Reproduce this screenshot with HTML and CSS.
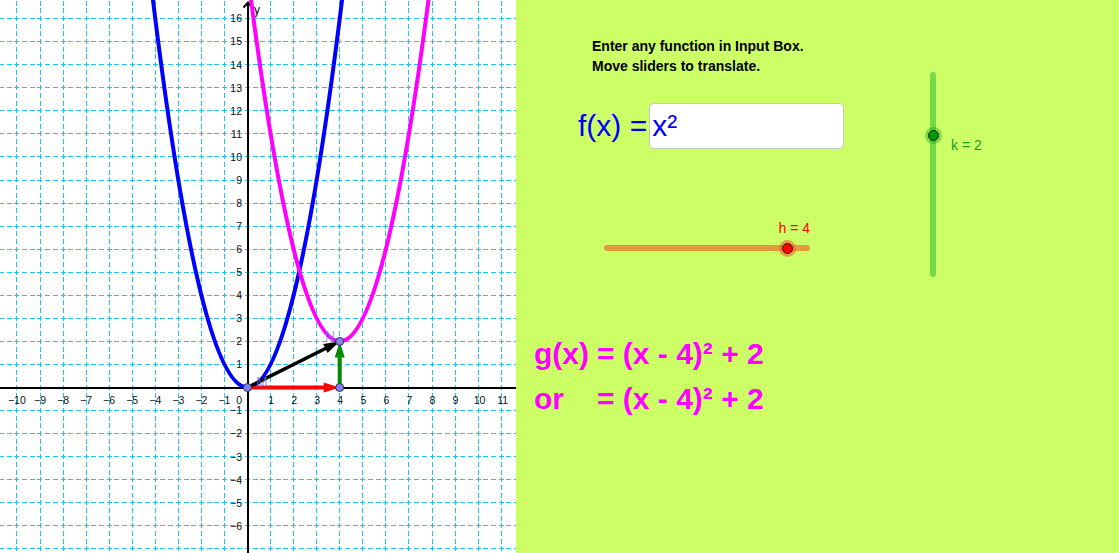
FILE: index.html
```html
<!DOCTYPE html>
<html lang="en">
<head>
<meta charset="utf-8">
<title>Translating functions</title>
<link rel="stylesheet" href="styles.css">
</head>
<body>
<div class="app">
  <div class="graphics">
    <svg width="516" height="553" viewBox="0 0 516 553" xmlns="http://www.w3.org/2000/svg">
      <rect x="0" y="0" width="516" height="553" fill="#ffffff"/>
      <path class="grid-v" d="M16.9 0V553M40 0V553M63 0V553M86.1 0V553M109.1 0V553M132.2 0V553M155.3 0V553M178.3 0V553M201.4 0V553M224.4 0V553M270.6 0V553M293.6 0V553M316.7 0V553M339.7 0V553M362.8 0V553M385.9 0V553M408.9 0V553M432 0V553M455 0V553M478.1 0V553M501.2 0V553"/>
      <path class="grid-h" d="M0 18.5H516M0 41.6H516M0 64.7H516M0 87.7H516M0 110.8H516M0 133.8H516M0 156.9H516M0 180H516M0 203H516M0 226.1H516M0 249.1H516M0 272.2H516M0 295.3H516M0 318.3H516M0 341.4H516M0 364.4H516M0 410.6H516M0 433.6H516M0 456.7H516M0 479.7H516M0 502.8H516M0 525.9H516M0 548.9H516"/>
      <path class="axis" d="M0 388H516M248 553V2"/>
      <path class="axis-arrow" d="M243.5 7.5L248 2.5L252.5 7.5"/>
      <text class="axis-name" x="254" y="13.5">y</text>
      <g class="xlabels">
        <text x="16.9" y="404">−10</text>
        <text x="40" y="404">−9</text>
        <text x="63" y="404">−8</text>
        <text x="86.1" y="404">−7</text>
        <text x="109.1" y="404">−6</text>
        <text x="132.2" y="404">−5</text>
        <text x="155.3" y="404">−4</text>
        <text x="178.3" y="404">−3</text>
        <text x="201.4" y="404">−2</text>
        <text x="224.4" y="404">−1</text>
        <text x="271.1" y="404">1</text>
        <text x="294.1" y="404">2</text>
        <text x="317.2" y="404">3</text>
        <text x="340.2" y="404">4</text>
        <text x="363.3" y="404">5</text>
        <text x="386.4" y="404">6</text>
        <text x="409.4" y="404">7</text>
        <text x="432.5" y="404">8</text>
        <text x="455.5" y="404">9</text>
        <text x="479.6" y="404">10</text>
        <text x="502.7" y="404">11</text>
      </g>
      <g class="ylabels">
        <text x="242" y="404">0</text>
        <text x="242" y="22.3">16</text>
        <text x="242" y="45.4">15</text>
        <text x="242" y="68.5">14</text>
        <text x="242" y="91.5">13</text>
        <text x="242" y="114.6">12</text>
        <text x="242" y="137.6">11</text>
        <text x="242" y="160.7">10</text>
        <text x="242" y="183.8">9</text>
        <text x="242" y="206.8">8</text>
        <text x="242" y="229.9">7</text>
        <text x="242" y="252.9">6</text>
        <text x="242" y="276">5</text>
        <text x="242" y="299.1">4</text>
        <text x="242" y="322.1">3</text>
        <text x="242" y="345.2">2</text>
        <text x="242" y="368.2">1</text>
        <text x="242" y="414.4">−1</text>
        <text x="242" y="437.4">−2</text>
        <text x="242" y="460.5">−3</text>
        <text x="242" y="483.5">−4</text>
        <text x="242" y="506.6">−5</text>
        <text x="242" y="529.7">−6</text>
      </g>
      <path class="curve-f" d="M150.65 -19.3Q247.5 794.3 344.35 -19.3"/>
      <path class="curve-g" d="M242.9 -65.4Q339.74 748.2 436.6 -65.4"/>
      <line class="vec-h" x1="247.5" y1="387.5" x2="326" y2="387.5"/>
      <polygon class="head-h" points="339.7,387.5 323.7,382.5 323.7,392.5"/>
      <line class="vec-k" x1="339.7" y1="387.5" x2="339.7" y2="356"/>
      <polygon class="head-k" points="339.7,341.4 334.7,357.4 344.7,357.4"/>
      <line class="vec-v" x1="247.5" y1="387.5" x2="327" y2="347.8"/>
      <polygon class="head-v" points="339.7,341.4 327.6,353 323.2,344.1"/>
      <circle class="pt" cx="247.5" cy="387.5" r="4"/>
      <circle class="pt" cx="339.7" cy="387.5" r="4"/>
      <circle class="pt" cx="339.7" cy="341.4" r="4"/>
      <text class="pt-label" x="256" y="387">M</text>
      <text class="pt-label" x="325" y="341">N</text>
    </svg>
  </div>
  <div class="algebra">
    <div class="main">
      <div class="instructions">
        <p>Enter any function in Input Box.</p>
        <p>Move sliders to translate.</p>
      </div>
      <div class="func-row">
        <span class="func-label">f(x) =</span>
        <div class="input-box">x²</div>
      </div>
      <div class="h-slider">
        <div class="slider-label h-label">h = 4</div>
        <div class="h-track"><span class="knob h-knob"></span></div>
      </div>
      <div class="result">
        <div class="result-line"><span class="lhs">g(x)</span>= (x - 4)² + 2</div>
        <div class="result-line"><span class="lhs">or</span>= (x - 4)² + 2</div>
      </div>
    </div>
    <div class="k-slider">
      <div class="k-track"><span class="knob k-knob"></span></div>
      <div class="slider-label k-label">k = 2</div>
    </div>
  </div>
</div>
</body>
</html>
```

FILE: styles.css
```css
* {
  margin: 0;
  padding: 0;
  box-sizing: border-box;
}

html,
body {
  width: 1119px;
  height: 553px;
  overflow: hidden;
}

body {
  font-family: "Liberation Sans", Arial, sans-serif;
  background: #ccff66;
}

.app {
  display: flex;
  height: 553px;
}

.graphics {
  width: 516px;
  flex: none;
  background: #ffffff;
}

.graphics svg {
  display: block;
}

.grid-v,
.grid-h {
  fill: none;
  stroke: #1ec4f2;
  stroke-width: 1;
  stroke-dasharray: 5 2.687;
  shape-rendering: crispEdges;
}

.grid-v {
  stroke-dashoffset: 7.06;
}

.grid-h {
  stroke-dashoffset: 0.97;
}

.axis {
  fill: none;
  stroke: #000000;
  stroke-width: 2;
  shape-rendering: crispEdges;
}

.axis-arrow {
  fill: none;
  stroke: #000000;
  stroke-width: 2;
}

.axis-name {
  font-family: "Liberation Sans", Arial, sans-serif;
  font-size: 12px;
  fill: #000000;
}

.xlabels text,
.ylabels text {
  font-family: "Liberation Sans", Arial, sans-serif;
  font-size: 10.5px;
  fill: #111111;
}

.xlabels text {
  text-anchor: middle;
}

.ylabels text {
  text-anchor: end;
}

.curve-f {
  fill: none;
  stroke: #0000ff;
  stroke-width: 4;
}

.curve-g {
  fill: none;
  stroke: #ff00ff;
  stroke-width: 4;
}

.vec-h {
  stroke: #ff0000;
  stroke-width: 4;
}

.head-h {
  fill: #ff0000;
}

.vec-k {
  stroke: #008a00;
  stroke-width: 4;
}

.head-k {
  fill: #008a00;
}

.vec-v {
  stroke: #000000;
  stroke-width: 3.5;
}

.head-v {
  fill: #000000;
}

.pt {
  fill: #7f7fff;
  stroke: #333333;
  stroke-width: 1;
}

.pt-label {
  font-family: "Liberation Sans", Arial, sans-serif;
  font-size: 14px;
  fill: #7070ff;
  fill-opacity: 0.75;
}

.algebra {
  flex: 1;
  display: flex;
  background: #ccff66;
}

.main {
  width: 414px;
  flex: none;
  display: flex;
  flex-direction: column;
  align-items: flex-start;
}

.instructions {
  margin: 36px 0 0 76px;
  font-weight: bold;
  font-size: 14px;
  line-height: 20px;
  color: #000000;
}

.func-row {
  margin: 27px 0 0 62px;
  display: flex;
  align-items: center;
  color: #0000ff;
  font-size: 30px;
}

.func-label {
  line-height: 34px;
  white-space: nowrap;
}

.input-box {
  margin-left: 2px;
  width: 195px;
  height: 46px;
  border: 1px solid #c6c6c6;
  border-radius: 5px;
  background: #ffffff;
  display: flex;
  align-items: center;
  padding-left: 2px;
  line-height: 34px;
}

.h-slider {
  margin: 70.5px 0 0 88px;
  width: 206px;
  display: flex;
  flex-direction: column;
  align-items: flex-end;
}

.slider-label {
  font-size: 14px;
  line-height: 16px;
  white-space: nowrap;
}

.h-label {
  color: #ff0000;
}

.h-track {
  margin-top: 9.5px;
  width: 206px;
  height: 6px;
  border-radius: 3px;
  background: #e29a3e;
  position: relative;
}

.knob {
  position: absolute;
  width: 11px;
  height: 11px;
  border-radius: 50%;
  border: 1px solid #222222;
}

.h-knob {
  left: 177.5px;
  top: -2.5px;
  background: #ff0000;
  box-shadow: 0 0 0 3px rgba(240, 100, 40, 0.6);
}

.result {
  margin: 80px 0 0 18px;
  color: #ff00ff;
  font-weight: bold;
  font-size: 30px;
  line-height: 45px;
  white-space: nowrap;
}

.lhs {
  display: inline-block;
  width: 63px;
}

.k-slider {
  display: flex;
  align-items: flex-start;
  padding-top: 72px;
}

.k-track {
  width: 6px;
  height: 205px;
  border-radius: 3px;
  background: #77d94a;
  position: relative;
}

.k-knob {
  left: -2.5px;
  top: 57.5px;
  background: #009900;
  box-shadow: 0 0 0 3px rgba(0, 150, 0, 0.35);
}

.k-label {
  margin: 65px 0 0 15px;
  color: #229922;
}
```
